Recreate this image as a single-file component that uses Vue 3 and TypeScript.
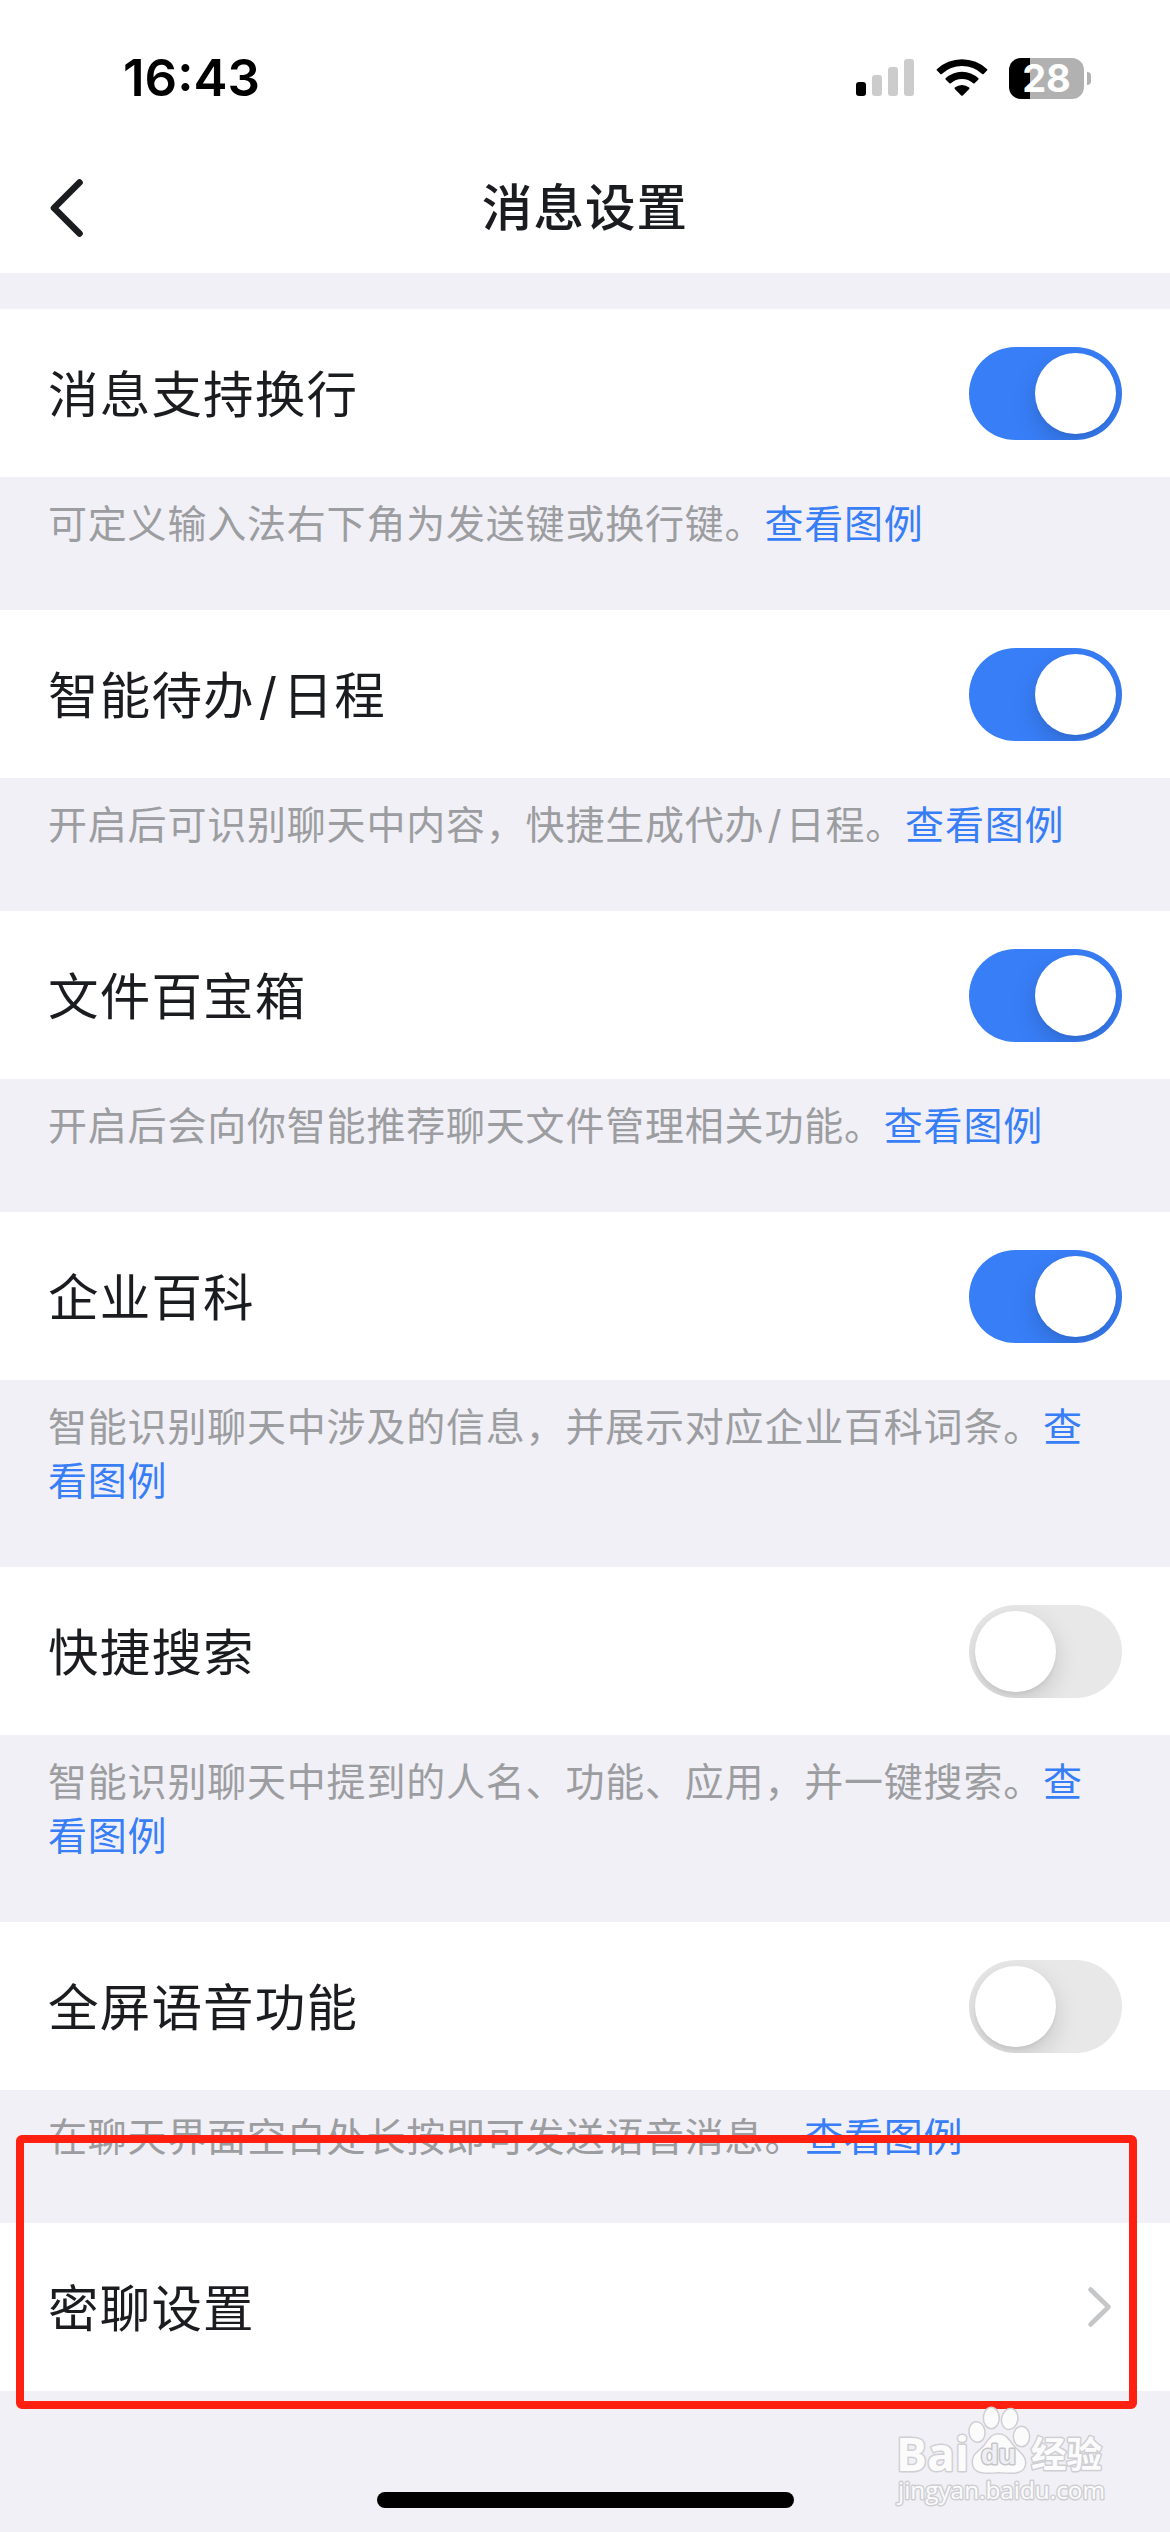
<script setup lang="ts">
interface Setting {
  label: string
  desc: string
  on: boolean
}

const settings: Setting[] = [
  { label: '消息支持换行', desc: '可定义输入法右下角为发送键或换行键。', on: true },
  { label: '智能待办/日程', desc: '开启后可识别聊天中内容，快捷生成代办/日程。', on: true },
  { label: '文件百宝箱', desc: '开启后会向你智能推荐聊天文件管理相关功能。', on: true },
  { label: '企业百科', desc: '智能识别聊天中涉及的信息，并展示对应企业百科词条。', on: true },
  { label: '快捷搜索', desc: '智能识别聊天中提到的人名、功能、应用，并一键搜索。', on: false },
  { label: '全屏语音功能', desc: '在聊天界面空白处长按即可发送语音消息。', on: false },
]

// Splits out slashes so they can get extra side spacing between Chinese characters.
const parts = (text: string): string[] => text.split(/(\/)/)
</script>

<template>
  <div class="screen">
    <header class="top">
      <div class="status">
        <span class="time">16:43</span>
        <div class="indicators">
          <svg class="signal" width="58" height="38" viewBox="0 0 58 38">
            <rect x="0" y="23" width="10" height="14" rx="3" fill="#000" />
            <rect x="16" y="16" width="10" height="21" rx="3" fill="#ccc" />
            <rect x="32" y="8" width="10" height="29" rx="3" fill="#ccc" />
            <rect x="48" y="0" width="10" height="37" rx="3" fill="#ccc" />
          </svg>
          <svg class="wifi" width="52" height="38" viewBox="0 0 52 38">
            <path d="M0.8 10.3 A36.5 36.5 0 0 1 51.2 10.3 Q51.6 11 51 11.6 L47.6 15 Q46.9 15.5 46.2 14.9 A29.8 29.8 0 0 0 5.8 14.9 Q5.1 15.5 4.4 15 L1 11.6 Q0.4 11 0.8 10.3Z" />
            <path d="M9.6 19.3 A24 24 0 0 1 42.4 19.3 Q43 20 42.4 20.6 L38.6 24.3 Q37.9 24.9 37.2 24.3 A16.8 16.8 0 0 0 14.8 24.3 Q14.1 24.9 13.4 24.3 L9.6 20.6 Q9 20 9.6 19.3Z" />
            <path d="M18.8 28.6 A11.5 11.5 0 0 1 33.2 28.6 Q33.9 29.3 33.2 30 L26.8 36.5 Q26 37.2 25.2 36.5 L18.8 30 Q18.1 29.3 18.8 28.6Z" />
          </svg>
          <div class="battery"><span>28</span></div>
          <i class="nub"></i>
        </div>
      </div>
      <div class="nav">
        <svg class="back" width="36" height="60" viewBox="0 0 36 60">
          <path d="M31.5 4.5 L6 30 L31.5 55.5" fill="none" stroke="#1a1c1f" stroke-width="6.6" stroke-linecap="round" stroke-linejoin="round" />
        </svg>
        <h1>消息设置</h1>
      </div>
    </header>

    <main>
      <section v-for="s in settings" :key="s.label">
        <div class="row">
          <span class="label"><span v-for="(p, i) in parts(s.label)" :key="i" :class="{ slash: p === '/' }">{{ p }}</span></span>
          <span class="toggle" :class="{ on: s.on }"><i></i></span>
        </div>
        <p class="desc"><span v-for="(p, i) in parts(s.desc)" :key="i" :class="{ slash: p === '/' }">{{ p }}</span><a>查看图例</a></p>
      </section>
      <div class="row">
        <span class="label">密聊设置</span>
        <svg class="chevron" width="26" height="42" viewBox="0 0 26 42">
          <path d="M3.5 3.5 L21.5 21 L3.5 38.5" fill="none" stroke="#c5c6c8" stroke-width="4.6" stroke-linecap="round" stroke-linejoin="round" />
        </svg>
      </div>
    </main>

    <div class="highlight"></div>
    <div class="home"></div>

    <svg class="watermark" width="230" height="116" viewBox="890 2400 230 116">
      <g fill="#fbfbfc" stroke="#cfcfd3" stroke-width="3" paint-order="stroke" stroke-linejoin="round">
        <text class="latin bold" x="896" y="2471" font-size="46" textLength="73" lengthAdjust="spacingAndGlyphs">Bai</text>
        <ellipse cx="977" cy="2432" rx="7.3" ry="9.6" transform="rotate(-8 977 2432)" />
        <ellipse cx="991.3" cy="2418" rx="7.2" ry="10" />
        <ellipse cx="1009.7" cy="2419" rx="7.4" ry="9.8" transform="rotate(10 1009.7 2419)" />
        <ellipse cx="1021.5" cy="2436.5" rx="7.4" ry="9.6" />
        <path d="M998.5 2434.5 C1006 2434.5 1009 2441 1013 2446 C1018 2452 1025 2455 1025 2463 C1024.5 2474 1013 2473 999 2472 C985 2473 973 2474 973 2462 C973 2454 980 2451 984.5 2446 C988.5 2441 991 2434.5 998.5 2434.5Z" />
        <text class="latin du" x="981" y="2464" font-size="28" textLength="35" lengthAdjust="spacingAndGlyphs">du</text>
        <text class="cjk bold" x="1031" y="2468" font-size="36" textLength="71" lengthAdjust="spacingAndGlyphs">经验</text>
        <text class="latin" x="898" y="2499" font-size="24" textLength="207" lengthAdjust="spacingAndGlyphs">jingyan.baidu.com</text>
      </g>
    </svg>
  </div>
</template>

<style>
body {
  margin: 0;
  background: #f1f0f6;
}
</style>

<style scoped>
.screen {
  position: relative;
  width: 1170px;
  height: 2532px;
  overflow: hidden;
  background: #f1f0f6;
  color: #1a1c1f;
  font-family: Inter, 'Noto Sans CJK SC', sans-serif;
}
.top {
  height: 273px;
  margin-bottom: 36px;
  background: #fff;
}
.status {
  display: flex;
  justify-content: space-between;
  align-items: center;
  height: 156px;
  padding: 0 79px 0 123px;
  box-sizing: border-box;
}
.time {
  font-size: 51px;
  font-weight: 600;
  color: #000;
  line-height: 60px;
}
.indicators {
  display: flex;
  align-items: center;
}
.wifi {
  margin-left: 22px;
}
.battery {
  width: 75px;
  height: 41px;
  margin-left: 21px;
  border-radius: 12px;
  background: linear-gradient(90deg, #000 21px, #b1b1b1 21px);
  color: #fff;
  font-size: 38px;
  font-weight: 650;
  line-height: 41px;
  text-align: center;
}
.nub {
  width: 4px;
  height: 13px;
  margin-left: 3px;
  border-radius: 0 5px 5px 0;
  background: #b1b1b1;
}
.nav {
  display: grid;
  grid-template-columns: 120px 1fr 120px;
  align-items: center;
  height: 104px;
}
.back {
  margin-left: 48px;
}
h1 {
  margin: 0;
  text-align: center;
  font-size: 50.5px;
  letter-spacing: 1.1px;
  font-weight: 500;
  line-height: 72px;
}
.row {
  display: flex;
  align-items: center;
  justify-content: space-between;
  height: 168px;
  padding: 0 48px;
  box-sizing: border-box;
  background: #fff;
}
.label {
  padding-top: 3px;
  font-size: 50.5px;
  letter-spacing: 1.2px;
  line-height: 72px;
}
.slash {
  margin: 0 0.085em 0 0.08em;
}
.toggle {
  width: 153px;
  height: 93px;
  padding: 6px;
  margin-top: 1px;
  box-sizing: border-box;
  border-radius: 47px;
  background: #e8e8e8;
  overflow: hidden;
}
.toggle i {
  display: block;
  width: 81px;
  height: 81px;
  border-radius: 50%;
  background: #fff;
  box-shadow: 0 9px 24px rgba(0, 0, 0, 0.15), 0 3px 3px rgba(0, 0, 0, 0.04);
}
.toggle.on {
  background: #387ef7;
}
.toggle.on i {
  margin-left: 60px;
}
.desc {
  margin: 0;
  padding: 20px 48px 59px;
  color: #9c9da0;
  font-size: 39px;
  letter-spacing: 0.8px;
  line-height: 54px;
  word-break: break-all;
}
.desc a {
  color: #387ef7;
}
.chevron {
  margin-right: 9px;
}
.highlight {
  position: absolute;
  left: 16px;
  top: 2135px;
  width: 1121px;
  height: 274px;
  box-sizing: border-box;
  border: 8px solid #ff2011;
  border-radius: 6px;
}
.home {
  position: absolute;
  left: 377px;
  top: 2492px;
  width: 417px;
  height: 16px;
  border-radius: 8px;
  background: #000;
}
.watermark {
  position: absolute;
  left: 890px;
  top: 2400px;
}
.latin {
  font-family: 'Open Sans', sans-serif;
}
.bold {
  font-weight: 700;
}
.du {
  font-family: 'Liberation Sans', sans-serif;
  font-weight: 700;
  fill: #efeff3;
  stroke: #c6c6ca;
}
.cjk {
  font-family: 'Noto Sans CJK SC', sans-serif;
}
</style>
